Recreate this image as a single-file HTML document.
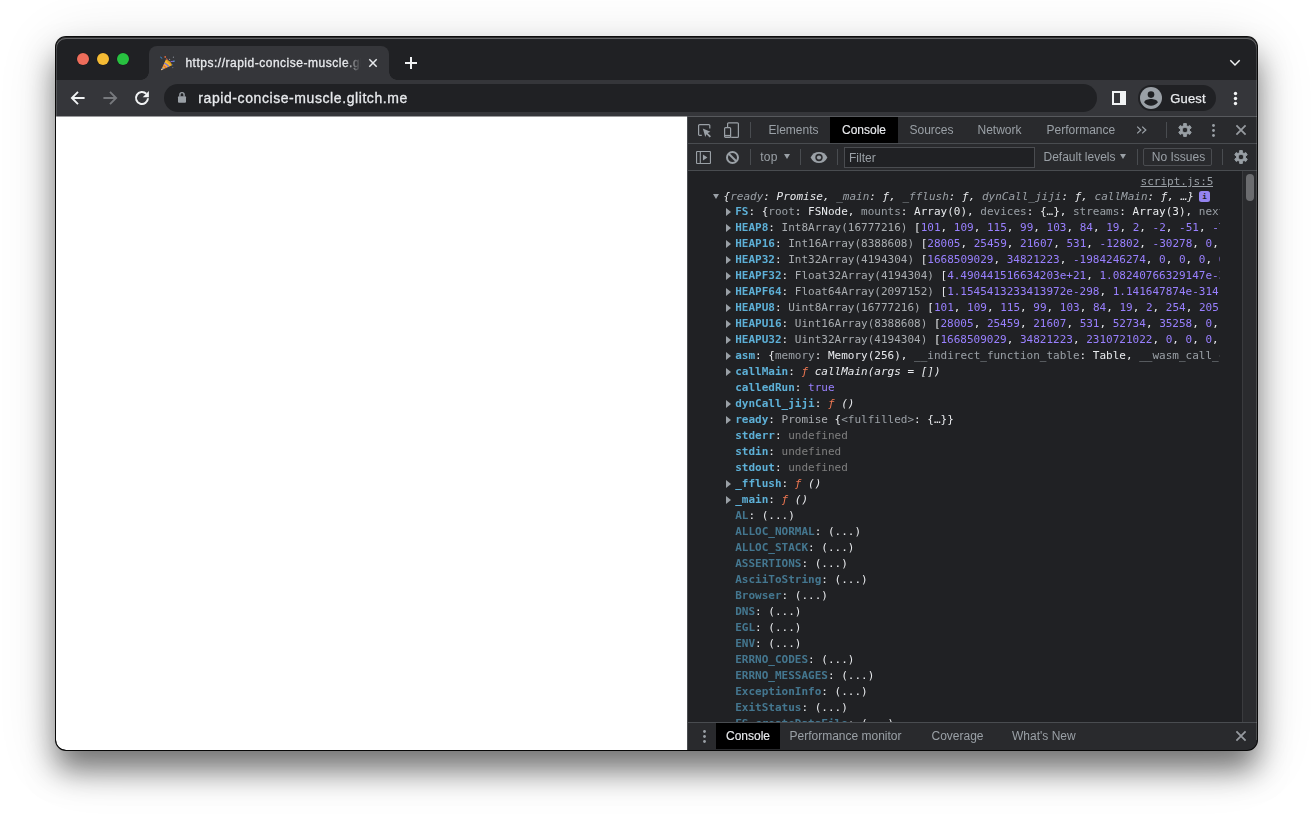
<!DOCTYPE html>
<html lang="en">
<head>
<meta charset="utf-8">
<title>https://rapid-concise-muscle.glitch.me</title>
<style>
*{box-sizing:border-box;margin:0;padding:0}
html,body{width:1313px;height:824px;overflow:hidden;background:#fff}
body{position:relative;font-family:"Liberation Sans",sans-serif;-webkit-font-smoothing:antialiased}
.abs{position:absolute}
#win{position:absolute;left:56px;top:37px;width:1201px;height:713px;border-radius:10px;background:#202124;
  box-shadow:0 0 0 1px rgba(0,0,0,.95),0 20px 30px rgba(0,0,0,.5),0 10px 60px rgba(0,0,0,.14);overflow:hidden}
#win .in{position:absolute;left:-56px;top:-37px;width:1313px;height:824px}
/* chrome frame */
#tabstrip{left:56px;top:37px;width:1201px;height:43px;background:#202124}
#ring{left:56px;top:37px;width:1201px;height:713px;border-radius:10px;pointer-events:none;box-shadow:inset 0 1px 0 0 rgba(0,0,0,.55),inset 0 2px 0 0 rgba(255,255,255,.3)}
#ring2{left:56px;top:38px;width:1201px;height:79px;border-left:1px solid rgba(255,255,255,.16);border-right:1px solid rgba(255,255,255,.16);border-radius:10px 10px 0 0;pointer-events:none}
#ring3{left:1256px;top:117px;width:1px;height:623px;background:rgba(255,255,255,.16)}
#tab{left:149px;top:46px;width:240px;height:34px;background:#35363a;border-radius:8px 8px 0 0}
#tab:before,#tab:after{content:"";position:absolute;bottom:0;width:8px;height:8px;background:radial-gradient(circle at 0 0,rgba(53,54,58,0) 7.5px,#35363a 8px)}
#tab:before{left:-8px}
#tab:after{right:-8px;background:radial-gradient(circle at 100% 0,rgba(53,54,58,0) 7.5px,#35363a 8px)}
#toolbar{left:56px;top:80px;width:1201px;height:36px;background:#35363a}
#tbline{left:56px;top:116px;width:631px;height:1px;background:#9b9b9d}
#omni{left:164px;top:84px;width:933px;height:28px;border-radius:14px;background:#202124}
.dot{width:12px;height:12px;border-radius:50%;top:53px;box-shadow:0 0 0 .5px rgba(0,0,0,.25)}
#tabtitle{-webkit-text-stroke:.3px #e8eaed;left:185.4px;top:55px;width:178px;height:16px;font-size:12px;line-height:16px;color:#e8eaed;white-space:nowrap;overflow:hidden;letter-spacing:.51px;
 -webkit-mask-image:linear-gradient(90deg,#000 160px,transparent 176px);mask-image:linear-gradient(90deg,#000 160px,transparent 176px)}
#url{-webkit-text-stroke:.3px #e8eaed;left:198.3px;top:89px;font-size:14px;line-height:18px;color:#e8eaed;white-space:nowrap;letter-spacing:.58px}
#guestpill{left:1138px;top:85px;width:78px;height:26px;border-radius:13px;background:#202124}
#guest{left:1170.2px;top:90.8px;-webkit-text-stroke:.25px #e8eaed;font-size:13px;letter-spacing:.2px;line-height:16px;color:#e8eaed;font-weight:400}
/* page */
#page{left:56px;top:117px;width:631px;height:633px;background:#fff}
/* devtools */
#dt{left:687px;top:117px;width:570px;height:633px;background:#202124}
#dtsep{left:687px;top:117px;width:1px;height:633px;background:#494c50}
#dttabs{left:688px;top:117px;width:569px;height:26px;background:#292a2d}
#dttabsb{left:688px;top:143px;width:569px;height:1px;background:#494c50}
#ctool{left:688px;top:144px;width:569px;height:26px;background:#292a2d}
#ctoolb{left:688px;top:170px;width:569px;height:1px;background:#494c50}
#drawer{left:688px;top:723px;width:569px;height:27px;background:#292a2d}
#drawerb{left:688px;top:722px;width:569px;height:1px;background:#494c50}
.dtt{position:absolute;top:117px;height:26px;line-height:26px;font-size:12px;color:#9aa0a6;white-space:nowrap}
.drt{position:absolute;top:723px;height:26px;line-height:26px;font-size:12px;color:#9aa0a6;white-space:nowrap}
.selbg{background:#000}
.selt{color:#e8eaed;text-align:center;-webkit-text-stroke:.15px #e8eaed}
.vsep{position:absolute;width:1px;background:#494c50}
.ct{position:absolute;font-size:12px;line-height:16px;color:#9aa0a6;white-space:nowrap}
#filter{left:844px;top:147px;width:191px;height:21px;border:1px solid #4a4c50;background:#202124}
#noissues{left:1142.5px;top:148px;width:69.5px;height:18px;border:1px solid #4a4c50;border-radius:2px}
/* console */
#cons{left:688px;top:171px;width:555px;height:551px;overflow:hidden;font-family:"DejaVu Sans Mono","Liberation Mono",monospace;font-size:11px;color:#e8eaed}
.r{position:absolute;left:0;height:16px;line-height:16px;white-space:pre;width:532px;overflow:hidden}
.n{color:#5db0d7;font-weight:bold}
.nd{color:#5db0d7;font-weight:bold;opacity:.6}
.g{color:#9aa0a6}
.d{color:#a9adb1}
.v{color:#9980ff}
.f{color:#ee7752;font-style:italic}
.i{font-style:italic}
.u{color:#7f7f7f}
.w{color:#e8eaed}
.tri{position:absolute;width:0;height:0;border-style:solid}
.tr{border-width:4px 0 4px 5.5px;border-color:transparent transparent transparent #9aa0a6}
.td{border-width:5.8px 3.9px 0 3.9px;border-color:#9aa0a6 transparent transparent transparent}
#dttop{left:687px;top:116px;width:570px;height:1px;background:#57595d}
#info{width:11px;height:11px;border-radius:2.5px;background:#9484f0;color:#202124;font:bold 7.5px/11px "DejaVu Sans Mono",monospace;text-align:center}
#sb{left:1242px;top:171px;width:15px;height:551px;background:#2a2b2e;border-left:1px solid #3a3b3e}
#thumb{left:1246px;top:174px;width:8px;height:27px;border-radius:4px;background:#6b6c6f}
</style>
</head>
<body>
<div id="win"></div>
<div class="abs" id="clip" style="left:56px;top:37px;width:1201px;height:713px;border-radius:10px;overflow:hidden;-webkit-mask-image:linear-gradient(#000,#000);mask-image:linear-gradient(#000,#000)">
<div class="abs" style="left:-56px;top:-37px;width:1313px;height:824px">
<div class="abs" id="tabstrip"></div>
<div class="abs" id="tab"></div>
<div class="abs" id="toolbar"></div>
<div class="abs dot" style="left:77px;background:#ee6d5b"></div>
<div class="abs dot" style="left:97px;background:#f5bb34"></div>
<div class="abs dot" style="left:117px;background:#28c140"></div>
<svg class="abs" style="left:160px;top:55.6px" width="16" height="16" viewBox="0 0 16 16">
 <path d="M1 14.2 L5.9 3.6 C8.6 4.2 11.2 6.6 12 9.3 Z" fill="#f5b82e"/>
 <path d="M4.6 6.4 C6.4 7 8.6 9 9.4 10.4 L8 11 C7.2 9.6 5.6 8.2 4 7.7 Z" fill="#7d74d9"/>
 <path d="M3.4 9 C4.8 9.5 6.2 10.8 6.8 11.6 L5.5 12.2 C5 11.4 3.9 10.5 2.9 10.1 Z" fill="#e9644f"/>
 <path d="M2.2 11.6 C3 11.9 3.8 12.6 4.2 13 L3.2 13.3 C2.8 13 2.3 12.7 1.8 12.5 Z" fill="#7d74d9"/>
 <path d="M1 14.2 L1.7 12.7 L2.8 13.5 Z" fill="#e6e6e6"/>
 <path d="M5.9 3.6 C8.6 4.2 11.2 6.6 12 9.3 C10.6 9 7 6.4 5.9 3.6 Z" fill="#c98a1c" opacity=".55"/>
 <circle cx="5.2" cy=".9" r=".85" fill="#f0703c"/>
 <path d="M.3 1 L2.2 2.4" stroke="#3f8fd9" stroke-width="1" fill="none"/>
 <path d="M10.6 5.6 L14.4 5.2" stroke="#8a63d2" stroke-width="1" fill="none"/>
 <path d="M13.2 5.3 L14.6 5.1" stroke="#39b8e0" stroke-width="1" fill="none"/>
 <path d="M6.6 2.4 L7.4 4.2" stroke="#e9644f" stroke-width=".9" fill="none"/>
 <circle cx="13.4" cy="1.2" r=".6" fill="#8a8f98"/>
 <circle cx="9.6" cy="3.4" r=".6" fill="#8a8f98"/>
 <circle cx="12.8" cy="11.6" r=".6" fill="#6f7680"/>
 <circle cx="12.6" cy="8.8" r=".5" fill="#4a78b8"/>
</svg>
<div class="abs" id="tabtitle">https://rapid-concise-muscle.glitch.me</div>
<svg class="abs" style="left:367px;top:57px" width="12" height="12" viewBox="0 0 12 12"><path d="M2.3 2.3 L9.7 9.7 M9.7 2.3 L2.3 9.7" stroke="#e8eaed" stroke-width="1.5" fill="none"/></svg>
<svg class="abs" style="left:404px;top:56px" width="14" height="14" viewBox="0 0 14 14"><path d="M7 1 V13 M1 7 H13" stroke="#f1f3f4" stroke-width="2" fill="none"/></svg>
<svg class="abs" style="left:1228px;top:57px" width="14" height="12" viewBox="0 0 14 12"><path d="M2.3 3.3 L7 8 L11.7 3.3" stroke="#f1f3f4" stroke-width="1.5" fill="none"/></svg>
<!-- nav -->
<svg class="abs" style="left:70px;top:90px" width="16" height="16" viewBox="0 0 16 16"><path d="M14.6 8 H2.8 M8 1.9 L1.9 8 L8 14.1" stroke="#f1f3f4" stroke-width="1.9" fill="none" stroke-linejoin="miter"/></svg>
<svg class="abs" style="left:102px;top:90px" width="16" height="16" viewBox="0 0 16 16"><path d="M1.4 8 H13.2 M8 1.9 L14.1 8 L8 14.1" stroke="#77797d" stroke-width="1.9" fill="none" stroke-linejoin="miter"/></svg>
<svg class="abs" style="left:134px;top:90px" width="16" height="16" viewBox="0 0 16 16"><path d="M14 8.3 A6 6 0 1 1 12.3 3.8" stroke="#f1f3f4" stroke-width="2" fill="none"/><path d="M14.9 1.1 V7.3 H8.7 Z" fill="#f1f3f4"/></svg>
<div class="abs" id="omni"></div>
<svg class="abs" style="left:177px;top:91px" width="10" height="13" viewBox="0 0 10 13"><path d="M2.9 5.6 V3.7 A2.1 2.1 0 0 1 7.1 3.7 V5.6" stroke="#9aa0a6" stroke-width="1.4" fill="none"/><rect x="1" y="5.2" width="8" height="6.6" rx="1" fill="#9aa0a6"/></svg>
<div class="abs" id="url">rapid-concise-muscle.glitch.me</div>
<svg class="abs" style="left:1112px;top:91px" width="14" height="14" viewBox="0 0 14 14"><rect x="1" y="1" width="12" height="12" fill="none" stroke="#f1f3f4" stroke-width="2"/><rect x="8" y="1" width="5" height="12" fill="#f1f3f4"/></svg>
<div class="abs" id="guestpill"></div>
<svg class="abs" style="left:1140px;top:87px" width="22" height="22" viewBox="0 0 22 22"><circle cx="11" cy="11" r="11" fill="#9aa0a6"/><circle cx="11" cy="7.6" r="3.3" fill="#202124"/><path d="M4.2 15.6 C4.2 12.6 8.6 11.9 11 11.9 C13.4 11.9 17.8 12.6 17.8 15.6 C16.2 17.6 13.8 18.8 11 18.8 C8.2 18.8 5.8 17.6 4.2 15.6 Z" fill="#202124"/></svg>
<div class="abs" id="guest">Guest</div>
<svg class="abs" style="left:1233px;top:91px" width="5" height="15" viewBox="0 0 5 15"><circle cx="2.5" cy="2.5" r="1.7" fill="#f1f3f4"/><circle cx="2.5" cy="7.5" r="1.7" fill="#f1f3f4"/><circle cx="2.5" cy="12.5" r="1.7" fill="#f1f3f4"/></svg>

<div class="abs" id="page"></div>
<div class="abs" id="tbline"></div>

<div class="abs" id="dt"></div>
<div class="abs" id="dttabs"></div>
<div class="abs" id="ctool"></div>
<div class="abs" id="drawer"></div>
<div class="abs" id="dttop"></div>
<div class="abs" id="dttabsb"></div>
<div class="abs" id="ctoolb"></div>
<div class="abs" id="drawerb"></div>
<div class="abs" id="dtsep"></div>
<!-- tab bar icons -->
<svg class="abs" style="left:697px;top:123px" width="15" height="15" viewBox="0 0 15 15"><path d="M12.8 5.6 V2.6 A1 1 0 0 0 11.8 1.6 H2.6 A1 1 0 0 0 1.6 2.6 V11.4 A1 1 0 0 0 2.6 12.4 H4.8" stroke="#9aa0a6" stroke-width="1.2" fill="none"/><path d="M5.8 5.6 L13.4 8.8 L10.7 9.9 L14 13.2 L12.7 14.5 L9.4 11.2 L8.3 13.9 Z" fill="#9aa0a6"/></svg>
<svg class="abs" style="left:723px;top:121px" width="17" height="18" viewBox="0 0 17 18"><path d="M4.6 6 V2.8 A1 1 0 0 1 5.6 1.8 H14.4 A1 1 0 0 1 15.4 2.8 V15.4 A1 1 0 0 1 14.4 16.4 H8.2" stroke="#9aa0a6" stroke-width="1.2" fill="none"/><rect x="1.6" y="6.6" width="6" height="9.8" rx="1" stroke="#9aa0a6" stroke-width="1.2" fill="none"/><path d="M1.6 14.6 H7.6" stroke="#9aa0a6" stroke-width="1.4"/></svg>
<div class="vsep" style="left:750px;top:122px;height:16px"></div>
<div class="dtt" style="left:768.5px">Elements</div>
<div class="dtt selbg" style="left:830px;width:68px"></div><div class="dtt selt" style="left:830px;width:68px">Console</div>
<div class="dtt" style="left:909.5px">Sources</div>
<div class="dtt" style="left:977.5px">Network</div>
<div class="dtt" style="left:1046.5px">Performance</div>
<svg class="abs" style="left:1136px;top:125px" width="12" height="10" viewBox="0 0 12 10"><path d="M1.2 1.6 L4.8 5 L1.2 8.4 M6.2 1.6 L9.8 5 L6.2 8.4" stroke="#9aa0a6" stroke-width="1.3" fill="none"/></svg>
<div class="vsep" style="left:1166px;top:122px;height:16px"></div>
<svg class="abs gear" style="left:1177px;top:122px" width="16" height="16" viewBox="0 0 16 16"><path fill="#9aa0a6" stroke="#9aa0a6" stroke-width=".9" stroke-linejoin="round" fill-rule="evenodd" d="M9.50 3.65 L9.37 1.54 L6.63 1.54 L6.50 3.65 L4.98 4.53 L3.10 3.58 L1.72 5.96 L3.48 7.12 L3.48 8.88 L1.72 10.04 L3.10 12.42 L4.98 11.47 L6.50 12.35 L6.63 14.46 L9.37 14.46 L9.50 12.35 L11.02 11.47 L12.90 12.42 L14.28 10.04 L12.52 8.88 L12.52 7.12 L14.28 5.96 L12.90 3.58 L11.02 4.53 Z M8 5.2 A2.8 2.8 0 1 0 8 10.8 A2.8 2.8 0 1 0 8 5.2 Z"/></svg>
<svg class="abs" style="left:1211px;top:123px" width="5" height="15" viewBox="0 0 5 15"><circle cx="2.5" cy="2.5" r="1.4" fill="#9aa0a6"/><circle cx="2.5" cy="7.5" r="1.4" fill="#9aa0a6"/><circle cx="2.5" cy="12.5" r="1.4" fill="#9aa0a6"/></svg>
<svg class="abs" style="left:1235px;top:124px" width="12" height="12" viewBox="0 0 12 12"><path d="M1.4 1.4 L10.6 10.6 M10.6 1.4 L1.4 10.6" stroke="#969a9f" stroke-width="1.8" fill="none"/></svg>
<!-- console toolbar -->
<svg class="abs" style="left:696px;top:151px" width="15" height="13" viewBox="0 0 16 14" preserveAspectRatio="none"><rect x=".6" y=".6" width="14.8" height="12.8" rx=".6" stroke="#9aa0a6" stroke-width="1.2" fill="none"/><path d="M4.6 .6 V13.4" stroke="#9aa0a6" stroke-width="1.2"/><path d="M7.4 3.8 L12.2 7 L7.4 10.2 Z" fill="#9aa0a6"/></svg>
<svg class="abs" style="left:725px;top:150px" width="15" height="15" viewBox="0 0 15 15"><circle cx="7.5" cy="7.5" r="5.5" stroke="#9aa0a6" stroke-width="2" fill="none"/><path d="M3.5 3.5 L11.5 11.5" stroke="#9aa0a6" stroke-width="2"/></svg>
<div class="vsep" style="left:750px;top:149px;height:16px"></div>
<div class="ct" style="left:760.2px;top:149px;letter-spacing:.25px">top</div>
<div class="tri" style="left:783.6px;top:154px;border-width:5.6px 3.8px 0 3.8px;border-color:#9aa0a6 transparent transparent transparent"></div>
<div class="vsep" style="left:800px;top:149px;height:16px"></div>
<svg class="abs" style="left:810px;top:151px" width="18" height="13" viewBox="0 0 18 13"><path d="M.6 6.5 C2.4 2.8 5.4 1 9 1 C12.6 1 15.6 2.8 17.4 6.5 C15.6 10.2 12.6 12 9 12 C5.4 12 2.4 10.2 .6 6.5 Z" fill="#9aa0a6"/><circle cx="9" cy="6.5" r="3.7" fill="#292a2d"/><circle cx="9" cy="6.5" r="2.1" fill="#9aa0a6"/></svg>
<div class="vsep" style="left:837px;top:149px;height:16px"></div>
<div class="abs" id="filter"></div>
<div class="ct" style="left:849px;top:150px">Filter</div>
<div class="ct" style="left:1043.5px;top:149px">Default levels</div>
<div class="tri" style="left:1119.7px;top:154px;border-width:5.6px 3.8px 0 3.8px;border-color:#9aa0a6 transparent transparent transparent"></div>
<div class="vsep" style="left:1137px;top:149px;height:16px"></div>
<div class="abs" id="noissues"></div>
<div class="ct" style="left:1151.8px;top:149px">No Issues</div>
<div class="vsep" style="left:1222px;top:149px;height:16px"></div>
<svg class="abs gear" style="left:1233px;top:149px" width="16" height="16" viewBox="0 0 16 16"><path fill="#9aa0a6" stroke="#9aa0a6" stroke-width=".9" stroke-linejoin="round" fill-rule="evenodd" d="M9.50 3.65 L9.37 1.54 L6.63 1.54 L6.50 3.65 L4.98 4.53 L3.10 3.58 L1.72 5.96 L3.48 7.12 L3.48 8.88 L1.72 10.04 L3.10 12.42 L4.98 11.47 L6.50 12.35 L6.63 14.46 L9.37 14.46 L9.50 12.35 L11.02 11.47 L12.90 12.42 L14.28 10.04 L12.52 8.88 L12.52 7.12 L14.28 5.96 L12.90 3.58 L11.02 4.53 Z M8 5.2 A2.8 2.8 0 1 0 8 10.8 A2.8 2.8 0 1 0 8 5.2 Z"/></svg>
<!-- drawer -->
<svg class="abs" style="left:702px;top:729px" width="5" height="15" viewBox="0 0 5 15"><circle cx="2.5" cy="2.5" r="1.4" fill="#9aa0a6"/><circle cx="2.5" cy="7.5" r="1.4" fill="#9aa0a6"/><circle cx="2.5" cy="12.5" r="1.4" fill="#9aa0a6"/></svg>
<div class="drt selbg" style="left:716px;width:64px"></div><div class="drt selt" style="left:716px;width:64px">Console</div>
<div class="drt" style="left:789.5px">Performance monitor</div>
<div class="drt" style="left:931.5px">Coverage</div>
<div class="drt" style="left:1012px">What's New</div>
<svg class="abs" style="left:1235px;top:730px" width="12" height="12" viewBox="0 0 12 12"><path d="M1.4 1.4 L10.6 10.6 M10.6 1.4 L1.4 10.6" stroke="#969a9f" stroke-width="1.8" fill="none"/></svg>
<!-- scrollbar -->
<div class="abs" id="sb"></div>
<div class="abs" id="thumb"></div>
<div class="abs" id="cons">
<div class="r" style="top:3px;left:0;width:525.4px;text-align:right;color:#9aa0a6;text-decoration:underline">script.js:5</div>
<div class="tri td" style="left:25px;top:22.5px"></div>
<div class="r" style="top:18px;left:35.60000000000002px"><span class="i">{<span class="g">ready</span>: Promise, <span class="g">_main</span>: ƒ, <span class="g">_fflush</span>: ƒ, <span class="g">dynCall_jiji</span>: ƒ, <span class="g">callMain</span>: ƒ, …}</span></div>
<div class="abs" id="info" style="left:511px;top:20px">i</div>
<div class="tri tr" style="left:38px;top:37px"></div>
<div class="r" style="top:33px;left:47.200000000000045px;width:484.79999999999995px"><span class="n">FS</span>: {<span class="g">root</span>: FSNode, <span class="g">mounts</span>: Array(0), <span class="g">devices</span>: {…}, <span class="g">streams</span>: Array(3), <span class="g">nextInode</span>: 4097, …}</div>
<div class="tri tr" style="left:38px;top:53px"></div>
<div class="r" style="top:49px;left:47.200000000000045px;width:484.79999999999995px"><span class="n">HEAP8</span>: <span class="d">Int8Array(16777216) </span>[<span class="v">101</span><span class="w">, </span><span class="v">109</span><span class="w">, </span><span class="v">115</span><span class="w">, </span><span class="v">99</span><span class="w">, </span><span class="v">103</span><span class="w">, </span><span class="v">84</span><span class="w">, </span><span class="v">19</span><span class="w">, </span><span class="v">2</span><span class="w">, </span><span class="v">-2</span><span class="w">, </span><span class="v">-51</span><span class="w">, </span><span class="v">-70</span><span class="w">, </span><span class="v">73</span><span class="w">, </span></div>
<div class="tri tr" style="left:38px;top:69px"></div>
<div class="r" style="top:65px;left:47.200000000000045px;width:484.79999999999995px"><span class="n">HEAP16</span>: <span class="d">Int16Array(8388608) </span>[<span class="v">28005</span><span class="w">, </span><span class="v">25459</span><span class="w">, </span><span class="v">21607</span><span class="w">, </span><span class="v">531</span><span class="w">, </span><span class="v">-12802</span><span class="w">, </span><span class="v">-30278</span><span class="w">, </span><span class="v">0</span><span class="w">, </span><span class="v">0</span><span class="w">, </span></div>
<div class="tri tr" style="left:38px;top:85px"></div>
<div class="r" style="top:81px;left:47.200000000000045px;width:484.79999999999995px"><span class="n">HEAP32</span>: <span class="d">Int32Array(4194304) </span>[<span class="v">1668509029</span><span class="w">, </span><span class="v">34821223</span><span class="w">, </span><span class="v">-1984246274</span><span class="w">, </span><span class="v">0</span><span class="w">, </span><span class="v">0</span><span class="w">, </span><span class="v">0</span><span class="w">, </span><span class="v">0</span><span class="w">, </span><span class="v">0</span><span class="w">, </span></div>
<div class="tri tr" style="left:38px;top:101px"></div>
<div class="r" style="top:97px;left:47.200000000000045px;width:484.79999999999995px"><span class="n">HEAPF32</span>: <span class="d">Float32Array(4194304) </span>[<span class="v">4.490441516634203e+21</span><span class="w">, </span><span class="v">1.08240766329147e-37</span><span class="w">, </span><span class="v">0</span><span class="w">, </span></div>
<div class="tri tr" style="left:38px;top:117px"></div>
<div class="r" style="top:113px;left:47.200000000000045px;width:484.79999999999995px"><span class="n">HEAPF64</span>: <span class="d">Float64Array(2097152) </span>[<span class="v">1.1545413233413972e-298</span><span class="w">, </span><span class="v">1.141647874e-314</span><span class="w">, </span><span class="v">0</span><span class="w">, </span></div>
<div class="tri tr" style="left:38px;top:133px"></div>
<div class="r" style="top:129px;left:47.200000000000045px;width:484.79999999999995px"><span class="n">HEAPU8</span>: <span class="d">Uint8Array(16777216) </span>[<span class="v">101</span><span class="w">, </span><span class="v">109</span><span class="w">, </span><span class="v">115</span><span class="w">, </span><span class="v">99</span><span class="w">, </span><span class="v">103</span><span class="w">, </span><span class="v">84</span><span class="w">, </span><span class="v">19</span><span class="w">, </span><span class="v">2</span><span class="w">, </span><span class="v">254</span><span class="w">, </span><span class="v">205</span><span class="w">, </span><span class="v">186</span><span class="w">, </span></div>
<div class="tri tr" style="left:38px;top:149px"></div>
<div class="r" style="top:145px;left:47.200000000000045px;width:484.79999999999995px"><span class="n">HEAPU16</span>: <span class="d">Uint16Array(8388608) </span>[<span class="v">28005</span><span class="w">, </span><span class="v">25459</span><span class="w">, </span><span class="v">21607</span><span class="w">, </span><span class="v">531</span><span class="w">, </span><span class="v">52734</span><span class="w">, </span><span class="v">35258</span><span class="w">, </span><span class="v">0</span><span class="w">, </span><span class="v">0</span><span class="w">, </span></div>
<div class="tri tr" style="left:38px;top:165px"></div>
<div class="r" style="top:161px;left:47.200000000000045px;width:484.79999999999995px"><span class="n">HEAPU32</span>: <span class="d">Uint32Array(4194304) </span>[<span class="v">1668509029</span><span class="w">, </span><span class="v">34821223</span><span class="w">, </span><span class="v">2310721022</span><span class="w">, </span><span class="v">0</span><span class="w">, </span><span class="v">0</span><span class="w">, </span><span class="v">0</span><span class="w">, </span><span class="v">0</span><span class="w">, </span><span class="v">0</span><span class="w">, </span></div>
<div class="tri tr" style="left:38px;top:181px"></div>
<div class="r" style="top:177px;left:47.200000000000045px;width:484.79999999999995px"><span class="n">asm</span>: {<span class="g">memory</span>: Memory(256), <span class="g">__indirect_function_table</span>: Table, <span class="g">__wasm_call_ctors</span>: ƒ, …}</div>
<div class="tri tr" style="left:38px;top:197px"></div>
<div class="r" style="top:193px;left:47.200000000000045px;width:484.79999999999995px"><span class="n">callMain</span>: <span class="f">ƒ</span> <span class="i">callMain(args = [])</span></div>
<div class="r" style="top:209px;left:47.200000000000045px;width:484.79999999999995px"><span class="n">calledRun</span>: <span class="v">true</span></div>
<div class="tri tr" style="left:38px;top:229px"></div>
<div class="r" style="top:225px;left:47.200000000000045px;width:484.79999999999995px"><span class="n">dynCall_jiji</span>: <span class="f">ƒ</span> <span class="i">()</span></div>
<div class="tri tr" style="left:38px;top:245px"></div>
<div class="r" style="top:241px;left:47.200000000000045px;width:484.79999999999995px"><span class="n">ready</span>: <span class="d">Promise </span>{<span class="g">&lt;fulfilled&gt;</span>: {…}}</div>
<div class="r" style="top:257px;left:47.200000000000045px;width:484.79999999999995px"><span class="n">stderr</span>: <span class="u">undefined</span></div>
<div class="r" style="top:273px;left:47.200000000000045px;width:484.79999999999995px"><span class="n">stdin</span>: <span class="u">undefined</span></div>
<div class="r" style="top:289px;left:47.200000000000045px;width:484.79999999999995px"><span class="n">stdout</span>: <span class="u">undefined</span></div>
<div class="tri tr" style="left:38px;top:309px"></div>
<div class="r" style="top:305px;left:47.200000000000045px;width:484.79999999999995px"><span class="n">_fflush</span>: <span class="f">ƒ</span> <span class="i">()</span></div>
<div class="tri tr" style="left:38px;top:325px"></div>
<div class="r" style="top:321px;left:47.200000000000045px;width:484.79999999999995px"><span class="n">_main</span>: <span class="f">ƒ</span> <span class="i">()</span></div>
<div class="r" style="top:337px;left:47.200000000000045px;width:484.79999999999995px"><span class="nd">AL</span>: (...)</div>
<div class="r" style="top:353px;left:47.200000000000045px;width:484.79999999999995px"><span class="nd">ALLOC_NORMAL</span>: (...)</div>
<div class="r" style="top:369px;left:47.200000000000045px;width:484.79999999999995px"><span class="nd">ALLOC_STACK</span>: (...)</div>
<div class="r" style="top:385px;left:47.200000000000045px;width:484.79999999999995px"><span class="nd">ASSERTIONS</span>: (...)</div>
<div class="r" style="top:401px;left:47.200000000000045px;width:484.79999999999995px"><span class="nd">AsciiToString</span>: (...)</div>
<div class="r" style="top:417px;left:47.200000000000045px;width:484.79999999999995px"><span class="nd">Browser</span>: (...)</div>
<div class="r" style="top:433px;left:47.200000000000045px;width:484.79999999999995px"><span class="nd">DNS</span>: (...)</div>
<div class="r" style="top:449px;left:47.200000000000045px;width:484.79999999999995px"><span class="nd">EGL</span>: (...)</div>
<div class="r" style="top:465px;left:47.200000000000045px;width:484.79999999999995px"><span class="nd">ENV</span>: (...)</div>
<div class="r" style="top:481px;left:47.200000000000045px;width:484.79999999999995px"><span class="nd">ERRNO_CODES</span>: (...)</div>
<div class="r" style="top:497px;left:47.200000000000045px;width:484.79999999999995px"><span class="nd">ERRNO_MESSAGES</span>: (...)</div>
<div class="r" style="top:513px;left:47.200000000000045px;width:484.79999999999995px"><span class="nd">ExceptionInfo</span>: (...)</div>
<div class="r" style="top:529px;left:47.200000000000045px;width:484.79999999999995px"><span class="nd">ExitStatus</span>: (...)</div>
<div class="r" style="top:545px;left:47.200000000000045px;width:484.79999999999995px"><span class="nd">FS_createDataFile</span>: (...)</div>
</div>

</div>
</div>
<div class="abs" id="ring"></div>
<div class="abs" id="ring2"></div>
<div class="abs" id="ring3"></div>
</body>
</html>
